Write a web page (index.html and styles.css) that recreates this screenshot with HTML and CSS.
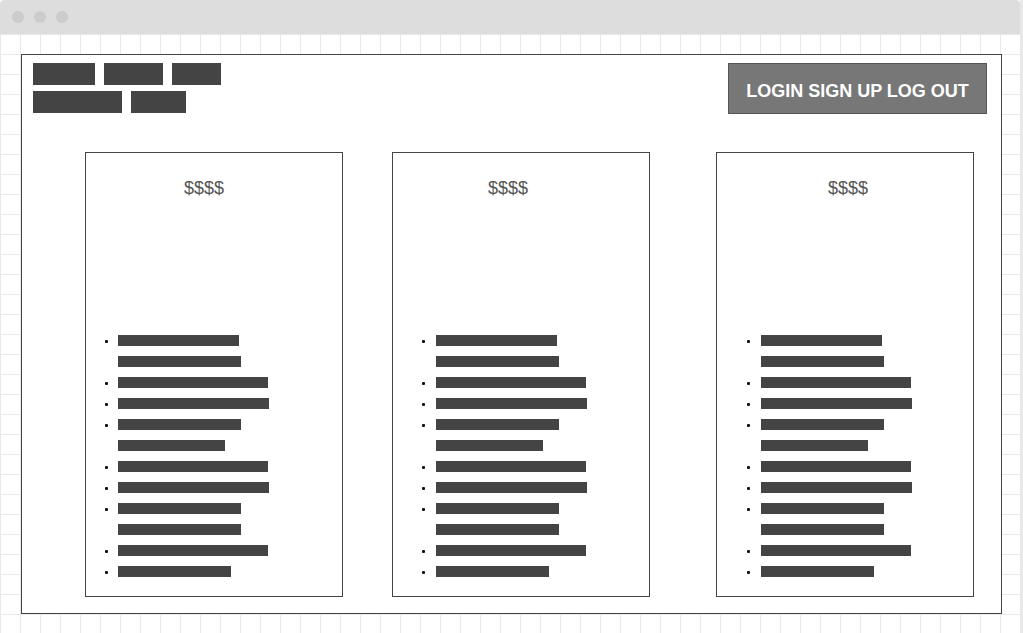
FILE: index.html
```html
<!DOCTYPE html>
<html lang="en">
<head>
    <meta charset="UTF-8">
    <meta name="viewport" content="width=device-width, initial-scale=1.0">
    <title>Pricing wireframe</title>
    <link rel="stylesheet" href="styles.css">
</head>
<body>

<div class="window">
    <!-- browser chrome -->
    <div class="titlebar">
        <span class="dot"></span>
        <span class="dot"></span>
        <span class="dot"></span>
    </div>

    <div class="canvas">
        <div class="frame">
            <div class="header">
                <div class="nav">
                    <div class="nav-row">
                        <span class="nav-item" style="width: 62px;"></span>
                        <span class="nav-item" style="width: 59px;"></span>
                        <span class="nav-item" style="width: 49px;"></span>
                    </div>
                    <div class="nav-row">
                        <span class="nav-item" style="width: 89px;"></span>
                        <span class="nav-item" style="width: 55px;"></span>
                    </div>
                </div>
                <div class="auth-btn">LOGIN SIGN UP LOG OUT</div>
            </div>

            <div class="plans">
                <div class="plan plan-one">
                    <div class="price">$$$$</div>
                    <ul class="features">
                        <li><span class="bullet"></span><div class="lines"><i class="bar" style="width: 121px;"></i><i class="bar" style="width: 123px;"></i></div></li>
                        <li><span class="bullet"></span><div class="lines"><i class="bar" style="width: 150px;"></i></div></li>
                        <li><span class="bullet"></span><div class="lines"><i class="bar" style="width: 151px;"></i></div></li>
                        <li><span class="bullet"></span><div class="lines"><i class="bar" style="width: 123px;"></i><i class="bar" style="width: 107px;"></i></div></li>
                        <li><span class="bullet"></span><div class="lines"><i class="bar" style="width: 150px;"></i></div></li>
                        <li><span class="bullet"></span><div class="lines"><i class="bar" style="width: 151px;"></i></div></li>
                        <li><span class="bullet"></span><div class="lines"><i class="bar" style="width: 123px;"></i><i class="bar" style="width: 123px;"></i></div></li>
                        <li><span class="bullet"></span><div class="lines"><i class="bar" style="width: 150px;"></i></div></li>
                        <li><span class="bullet"></span><div class="lines"><i class="bar" style="width: 113px;"></i></div></li>
                    </ul>
                </div>

                <div class="plan plan-two">
                    <div class="price">$$$$</div>
                    <ul class="features">
                        <li><span class="bullet"></span><div class="lines"><i class="bar" style="width: 121px;"></i><i class="bar" style="width: 123px;"></i></div></li>
                        <li><span class="bullet"></span><div class="lines"><i class="bar" style="width: 150px;"></i></div></li>
                        <li><span class="bullet"></span><div class="lines"><i class="bar" style="width: 151px;"></i></div></li>
                        <li><span class="bullet"></span><div class="lines"><i class="bar" style="width: 123px;"></i><i class="bar" style="width: 107px;"></i></div></li>
                        <li><span class="bullet"></span><div class="lines"><i class="bar" style="width: 150px;"></i></div></li>
                        <li><span class="bullet"></span><div class="lines"><i class="bar" style="width: 151px;"></i></div></li>
                        <li><span class="bullet"></span><div class="lines"><i class="bar" style="width: 123px;"></i><i class="bar" style="width: 123px;"></i></div></li>
                        <li><span class="bullet"></span><div class="lines"><i class="bar" style="width: 150px;"></i></div></li>
                        <li><span class="bullet"></span><div class="lines"><i class="bar" style="width: 113px;"></i></div></li>
                    </ul>
                </div>

                <div class="plan plan-three">
                    <div class="price">$$$$</div>
                    <ul class="features">
                        <li><span class="bullet"></span><div class="lines"><i class="bar" style="width: 121px;"></i><i class="bar" style="width: 123px;"></i></div></li>
                        <li><span class="bullet"></span><div class="lines"><i class="bar" style="width: 150px;"></i></div></li>
                        <li><span class="bullet"></span><div class="lines"><i class="bar" style="width: 151px;"></i></div></li>
                        <li><span class="bullet"></span><div class="lines"><i class="bar" style="width: 123px;"></i><i class="bar" style="width: 107px;"></i></div></li>
                        <li><span class="bullet"></span><div class="lines"><i class="bar" style="width: 150px;"></i></div></li>
                        <li><span class="bullet"></span><div class="lines"><i class="bar" style="width: 151px;"></i></div></li>
                        <li><span class="bullet"></span><div class="lines"><i class="bar" style="width: 123px;"></i><i class="bar" style="width: 123px;"></i></div></li>
                        <li><span class="bullet"></span><div class="lines"><i class="bar" style="width: 150px;"></i></div></li>
                        <li><span class="bullet"></span><div class="lines"><i class="bar" style="width: 113px;"></i></div></li>
                    </ul>
                </div>
            </div>
        </div>
    </div>
</div>

</body>
</html>
```

FILE: styles.css
```css
body {
    margin: 0;
    font-family: "Liberation Sans", Arial, sans-serif;
    background-color: #fff;
}
.window {
    width: 1020px;
    height: 633px;
    border-right: 3px solid #e8e8e8;
    overflow: hidden;
}
.titlebar {
    height: 34px;
    background-color: #ddd;
    border-radius: 4px 4px 0 0;
    display: flex;
    align-items: center;
    gap: 10px;
    padding-left: 12px;
}
.titlebar .dot {
    width: 12px;
    height: 12px;
    border-radius: 50%;
    background-color: #ccc;
}
.canvas {
    height: 599px;
    padding: 20px 0 0 21px;
    box-sizing: border-box;
    background-color: #fff;
    background-image:
        linear-gradient(to right, #e9e9e9 1px, transparent 1px),
        linear-gradient(to bottom, #e9e9e9 1px, transparent 1px);
    background-size: 20px 20px;
}
.frame {
    width: 981px;
    height: 560px;
    box-sizing: border-box;
    border: 1px solid #444;
    background-color: #fff;
    padding: 8px 14px 0 11px;
}
.header {
    display: flex;
    justify-content: space-between;
    align-items: flex-start;
}
.nav {
    display: flex;
    flex-direction: column;
    gap: 6px;
}
.nav-row {
    display: flex;
    gap: 9px;
}
.nav-item {
    height: 22px;
    background-color: #444;
}
.auth-btn {
    width: 259px;
    height: 51px;
    box-sizing: border-box;
    border: 1px solid #555;
    background-color: #777;
    color: #fff;
    font-size: 18px;
    font-weight: bold;
    display: flex;
    align-items: center;
    justify-content: center;
    padding-top: 5px;
}
.plans {
    display: flex;
    margin-top: 38px;
    margin-left: 52px;
}
.plan {
    width: 258px;
    height: 445px;
    box-sizing: border-box;
    border: 1px solid #444;
    padding-top: 25px;
}
.plan-one {
    margin-right: 49px;
}
.plan-two {
    margin-right: 66px;
}
.price {
    font-size: 18px;
    line-height: 20px;
    color: #555;
}
.plan-one .price {
    padding-left: 98px;
}
.plan-two .price {
    padding-left: 95px;
}
.plan-three .price {
    padding-left: 111px;
}
.features {
    list-style: none;
    margin: 137px 0 0 0;
    padding: 0;
}
.plan-one .features {
    padding-left: 19px;
}
.plan-two .features {
    padding-left: 29px;
}
.plan-three .features {
    padding-left: 30px;
}
.features li {
    display: flex;
    align-items: flex-start;
}
.bullet {
    width: 3px;
    height: 3px;
    margin-top: 5px;
    margin-right: 10px;
    background-color: #111;
    border-radius: 1px;
}
.plan-two .bullet,
.plan-three .bullet {
    margin-right: 11px;
}
.lines {
    display: flex;
    flex-direction: column;
}
.bar {
    display: block;
    height: 11px;
    margin-bottom: 10px;
    background-color: #444;
}
```
